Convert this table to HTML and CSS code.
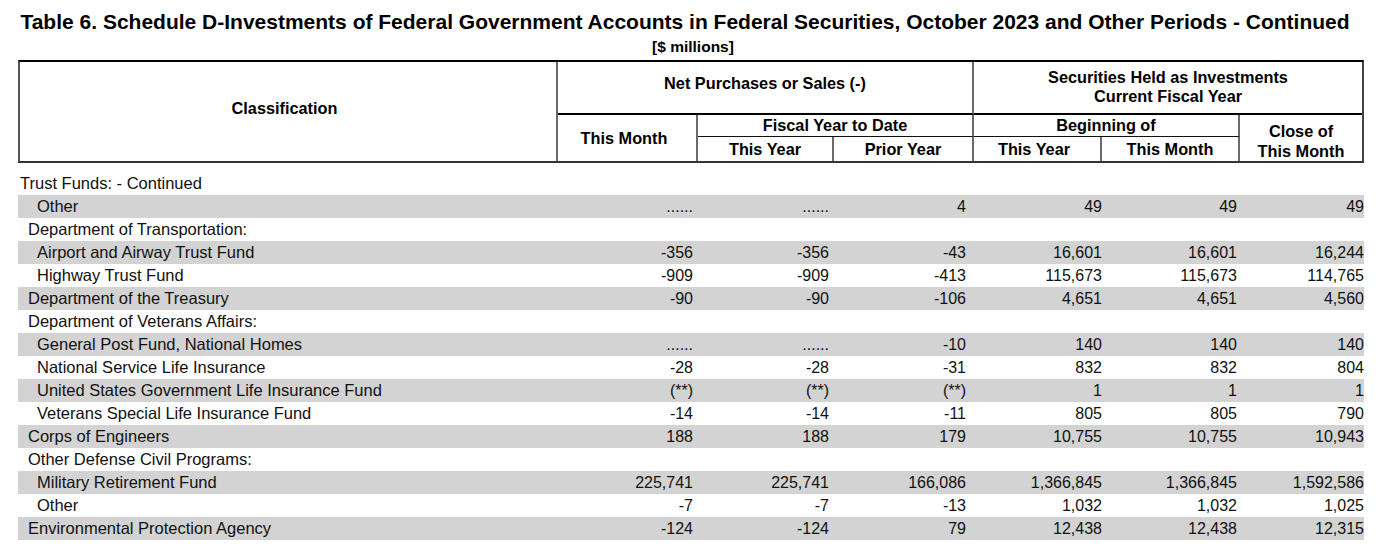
FILE: index.html
```html
<!DOCTYPE html>
<html lang="en">
<head>
<meta charset="utf-8">
<title>Table 6. Schedule D</title>
<link rel="stylesheet" href="styles.css">
</head>
<body>
<div class="page">
  <h1 class="title">Table 6. Schedule D-Investments of Federal Government Accounts in Federal Securities, October 2023 and Other Periods - Continued</h1>
  <div class="units">[$ millions]</div>

  <div class="head">
    <div class="hc c-class">Classification</div>
    <div class="hc c-net">Net Purchases or Sales (-)</div>
    <div class="hc c-sec">Securities Held as Investments<br>Current Fiscal Year</div>
    <div class="hc c-month">This Month</div>
    <div class="hc c-fytd">Fiscal Year to Date</div>
    <div class="hc c-begin">Beginning of</div>
    <div class="hc c-close">Close of<br>This Month</div>
    <div class="hc c-ty">This Year</div>
    <div class="hc c-py">Prior Year</div>
    <div class="hc c-bty">This Year</div>
    <div class="hc c-btm">This Month</div>
  </div>

  <table class="body">
    <colgroup>
      <col class="w-label"><col class="w-a"><col class="w-a"><col class="w-b"><col class="w-a"><col class="w-c"><col class="w-d">
    </colgroup>
    <tbody>
      <tr><td class="l0">Trust Funds: - Continued</td><td></td><td></td><td></td><td></td><td></td><td></td></tr>
      <tr class="g"><td class="l2">Other</td><td>......</td><td>......</td><td>4</td><td>49</td><td>49</td><td>49</td></tr>
      <tr><td class="l1">Department of Transportation:</td><td></td><td></td><td></td><td></td><td></td><td></td></tr>
      <tr class="g"><td class="l2">Airport and Airway Trust Fund</td><td>-356</td><td>-356</td><td>-43</td><td>16,601</td><td>16,601</td><td>16,244</td></tr>
      <tr><td class="l2">Highway Trust Fund</td><td>-909</td><td>-909</td><td>-413</td><td>115,673</td><td>115,673</td><td>114,765</td></tr>
      <tr class="g"><td class="l1">Department of the Treasury</td><td>-90</td><td>-90</td><td>-106</td><td>4,651</td><td>4,651</td><td>4,560</td></tr>
      <tr><td class="l1">Department of Veterans Affairs:</td><td></td><td></td><td></td><td></td><td></td><td></td></tr>
      <tr class="g"><td class="l2">General Post Fund, National Homes</td><td>......</td><td>......</td><td>-10</td><td>140</td><td>140</td><td>140</td></tr>
      <tr><td class="l2">National Service Life Insurance</td><td>-28</td><td>-28</td><td>-31</td><td>832</td><td>832</td><td>804</td></tr>
      <tr class="g"><td class="l2">United States Government Life Insurance Fund</td><td>(**)</td><td>(**)</td><td>(**)</td><td>1</td><td>1</td><td>1</td></tr>
      <tr><td class="l2">Veterans Special Life Insurance Fund</td><td>-14</td><td>-14</td><td>-11</td><td>805</td><td>805</td><td>790</td></tr>
      <tr class="g"><td class="l1">Corps of Engineers</td><td>188</td><td>188</td><td>179</td><td>10,755</td><td>10,755</td><td>10,943</td></tr>
      <tr><td class="l1">Other Defense Civil Programs:</td><td></td><td></td><td></td><td></td><td></td><td></td></tr>
      <tr class="g"><td class="l2">Military Retirement Fund</td><td>225,741</td><td>225,741</td><td>166,086</td><td>1,366,845</td><td>1,366,845</td><td>1,592,586</td></tr>
      <tr><td class="l2">Other</td><td>-7</td><td>-7</td><td>-13</td><td>1,032</td><td>1,032</td><td>1,025</td></tr>
      <tr class="g"><td class="l1">Environmental Protection Agency</td><td>-124</td><td>-124</td><td>79</td><td>12,438</td><td>12,438</td><td>12,315</td></tr>
    </tbody>
  </table>
</div>
</body>
</html>
```

FILE: styles.css
```css
html, body {
  margin: 0;
  padding: 0;
  background: #ffffff;
}

body {
  font-family: "Liberation Sans", Arial, sans-serif;
  color: #111111;
}

.page {
  width: 1384px;
  padding-top: 10px;
}

.title {
  margin: 0;
  font-size: 21px;
  line-height: 24px;
  font-weight: bold;
  text-align: center;
  padding-right: 14px;
  color: #000;
}

.units {
  margin-top: 4px;
  font-size: 15.5px;
  line-height: 18px;
  font-weight: bold;
  text-align: center;
  padding-left: 2px;
  color: #000;
}

.head {
  margin-top: 4px;
  margin-left: 18px;
  width: 1346px;
  box-sizing: border-box;
  display: grid;
  grid-template-columns: 538px 140px 136px 140px 128px 138px 122px;
  grid-template-rows: 53px 22px 24px;
  border-top: 2px solid #000;
  border-left: 2px solid #555;
  border-right: 2px solid #444;
  border-bottom: 2px solid #333;
}

.hc {
  display: flex;
  align-items: center;
  justify-content: center;
  text-align: center;
  font-weight: bold;
  font-size: 16.3px;
  line-height: 19px;
  color: #000;
  box-sizing: border-box;
}

.c-class { grid-column: 1; grid-row: 1 / 4; border-right: 2px solid #6a6a6a; padding-bottom: 6px; padding-right: 7px; }
.c-net { grid-column: 2 / 5; grid-row: 1; border-right: 2px solid #6a6a6a; border-bottom: 2px solid #000; padding-bottom: 8px; }
.c-sec { grid-column: 5 / 8; grid-row: 1; border-bottom: 2px solid #000; padding-bottom: 2px; }
.c-month { grid-column: 2; grid-row: 2 / 4; border-right: 2px solid #6a6a6a; padding-right: 6px; }
.c-fytd { grid-column: 3 / 5; grid-row: 2; border-right: 2px solid #6a6a6a; border-bottom: 1px solid #111; }
.c-begin { grid-column: 5 / 7; grid-row: 2; border-right: 2px solid #6a6a6a; border-bottom: 1px solid #111; }
.c-close { grid-column: 7; grid-row: 2 / 4; line-height: 20px; padding-top: 6px; }
.c-ty { grid-column: 3; grid-row: 3; border-right: 2px solid #6a6a6a; }
.c-py { grid-column: 4; grid-row: 3; border-right: 2px solid #6a6a6a; }
.c-bty { grid-column: 5; grid-row: 3; border-right: 2px solid #6a6a6a; padding-right: 6px; }
.c-btm { grid-column: 6; grid-row: 3; border-right: 2px solid #6a6a6a; }

.body {
  margin-top: 9px;
  margin-left: 18px;
  width: 1346px;
  table-layout: fixed;
  border-collapse: collapse;
  border-spacing: 0;
  font-size: 16px;
}

.w-label { width: 539px; }
.w-a { width: 136px; }
.w-b { width: 137px; }
.w-c { width: 135px; }
.w-d { width: 127px; }

.body td {
  height: 23px;
  padding: 0;
  line-height: 23px;
  text-align: right;
  white-space: nowrap;
  color: #111;
}

.body td.l0,
.body td.l1,
.body td.l2 {
  text-align: left;
  font-size: 16.5px;
}

.body td.l0 { padding-left: 2px; }
.body td.l1 { padding-left: 10px; }
.body td.l2 { padding-left: 19px; }

.body tr.g td {
  background: #d3d3d3;
}
```
